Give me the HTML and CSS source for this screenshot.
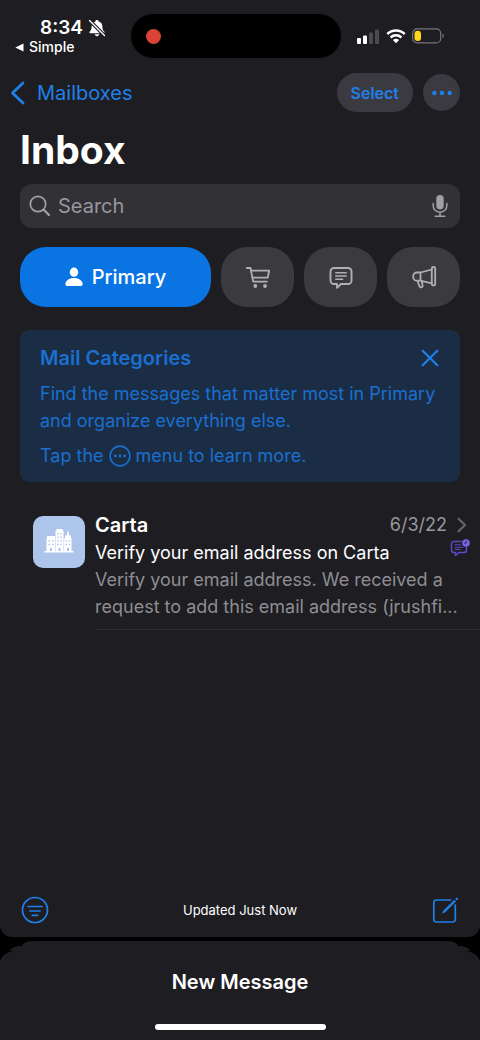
FILE: index.html
```html
<!DOCTYPE html>
<html lang="en">
<head>
<meta charset="utf-8">
<meta name="viewport" content="width=device-width, initial-scale=1">
<title>Inbox</title>
<link rel="stylesheet" href="styles.css">
</head>
<body>
<div class="screen">
  <div class="mailbox">
    <header class="status">
      <div class="status-left">
        <div class="clock">
          <span>8:34</span>
          <svg width="18" height="18" viewBox="0 0 18 18" aria-hidden="true">
            <path fill="#fff" d="M9 1c-1 0-1.600.7-1.700 1.500C4.600 3.300 3.600 5.200 3.600 7.800c0 2.600-.7 3.700-1.800 4.800-.7.800-.3 1.700.6 1.700h13.200c.9 0 1.300-.9.600-1.700-1.100-1.100-1.800-2.200-1.800-4.800 0-2.600-1-4.500-3.700-5.300C10.600 1.700 10 1 9 1z"/>
            <path fill="#fff" d="M6.700 15.300h4.600c-.2 1.100-1.100 1.900-2.300 1.900s-2.100-.8-2.300-1.900z"/>
            <path stroke="#1e1d22" stroke-width="3.600" d="M1 1l16 16"/>
            <path stroke="#fff" stroke-width="1.400" stroke-linecap="round" d="M1.500 1.500l15 15"/>
          </svg>
        </div>
        <a class="return" href="#simple">
          <svg width="9" height="9" viewBox="0 0 9 9" aria-hidden="true"><path fill="#fff" d="M8.500.4v8.200L.3 4.500z"/></svg>
          Simple
        </a>
      </div>
      <div class="island"><span class="record"></span></div>
      <div class="status-right">
        <svg width="24" height="16" viewBox="0 0 24 16" aria-hidden="true">
          <rect x="1" y="10" width="4" height="6" rx="1" fill="#fff"/>
          <rect x="7" y="7.500" width="4" height="8.500" rx="1" fill="#fff"/>
          <rect x="13" y="4.500" width="4" height="11.500" rx="1" fill="#4b4a50"/>
          <rect x="19" y="1.500" width="4" height="14.500" rx="1" fill="#4b4a50"/>
        </svg>
        <svg width="20" height="16" viewBox="0 0 20 16" aria-hidden="true">
          <g fill="none" stroke="#fff" stroke-width="2.500">
            <path d="M1.300 6a12.600 12.600 0 0 1 17.400 0"/>
            <path d="M4.600 9.500a7.900 7.900 0 0 1 10.800 0"/>
          </g>
          <path fill="#fff" d="M6.900 12a4.700 4.700 0 0 1 6.200 0L10 15.300z"/>
        </svg>
        <svg width="33" height="16" viewBox="0 0 33 16" aria-hidden="true">
          <rect x=".7" y=".9" width="28" height="14" rx="4.500" fill="none" stroke="#77767b" stroke-width="1.200"/>
          <rect x="2.500" y="2.800" width="6.500" height="10.200" rx="3" fill="#fdd816"/>
          <path fill="#77767b" d="M30.500 5.500c1.800.6 1.800 4 0 4.600z"/>
        </svg>
      </div>
    </header>

    <nav class="navbar">
      <a class="back" href="#mailboxes">
        <svg width="16" height="26" viewBox="0 0 16 26" aria-hidden="true"><path d="M13 3L2.500 13 13 23" fill="none" stroke="currentColor" stroke-width="2.800" stroke-linecap="round" stroke-linejoin="round"/></svg>
        Mailboxes
      </a>
      <button class="select" type="button">Select</button>
      <button class="more" type="button" aria-label="More">
        <svg width="20" height="6" viewBox="0 0 20 6" aria-hidden="true"><g fill="currentColor"><circle cx="2.300" cy="3" r="2.200"/><circle cx="10" cy="3" r="2.200"/><circle cx="17.700" cy="3" r="2.200"/></g></svg>
      </button>
    </nav>

    <main class="content">
      <h1 class="title">Inbox</h1>

      <label class="search">
        <svg width="22" height="22" viewBox="0 0 22 22" aria-hidden="true"><g fill="none" stroke="currentColor" stroke-linecap="round"><circle cx="9" cy="9" r="7.700" stroke-width="1.700"/><path d="M14.800 14.800l5.200 5.200" stroke-width="2.200"/></g></svg>
        <input class="search-input" type="search" placeholder="Search" aria-label="Search">
        <svg width="16" height="24" viewBox="0 0 16 24" aria-hidden="true"><rect x="4.300" y="1" width="7.400" height="14.500" rx="3.700" fill="currentColor"/><path d="M1.200 9.500v2.200a6.800 6.500 0 0 0 13.600 0V9.500M8 18.200v4M3.300 22.300h9.400" fill="none" stroke="currentColor" stroke-width="1.500" stroke-linecap="round"/></svg>
      </label>

      <div class="categories">
        <button class="category category-active" type="button">
          <svg width="18" height="20" viewBox="0 0 18 20" aria-hidden="true"><ellipse cx="9" cy="5.200" rx="4.200" ry="4.600" fill="currentColor"/><path fill="currentColor" d="M.4 17.300c0-3.600 3.800-6.200 8.600-6.200s8.600 2.600 8.600 6.200c0 1.100-.6 1.700-1.700 1.700H2.100C1 19 .4 18.400.4 17.300z"/></svg>
          Primary
        </button>
        <button class="category" type="button" aria-label="Transactions">
          <svg width="26" height="24" viewBox="0 0 26 24" aria-hidden="true"><g fill="none" stroke="currentColor" stroke-width="1.800" stroke-linecap="round" stroke-linejoin="round"><path d="M1.800 3h3.700l2.700 13.700h13.600"/><path d="M6.200 5.700h18l-1.500 7H7.500"/></g><circle cx="10.300" cy="21" r="1.900" fill="currentColor"/><circle cx="20" cy="21" r="1.900" fill="currentColor"/></svg>
        </button>
        <button class="category" type="button" aria-label="Updates">
          <svg width="24" height="24" viewBox="0 0 24 24" aria-hidden="true"><g fill="none" stroke="currentColor" stroke-linecap="round" stroke-linejoin="round"><path stroke-width="1.900" d="M5 3h14a3.500 3.500 0 0 1 3.500 3.500v9A3.500 3.500 0 0 1 19 19h-7l-4 3.800V19H5a3.500 3.500 0 0 1-3.500-3.500v-9A3.500 3.500 0 0 1 5 3z"/><path stroke-width="1.400" d="M6.700 7.700h10.600M6.700 11h10.600M6.700 14.300h7"/></g></svg>
        </button>
        <button class="category" type="button" aria-label="Promotions">
          <svg width="26" height="24" viewBox="0 0 26 24" aria-hidden="true"><g fill="none" stroke="currentColor" stroke-width="1.800" stroke-linejoin="round" stroke-linecap="round"><rect x="20.800" y="2" width="3.400" height="18.500" rx="1.500"/><path d="M20.800 4.500L9.500 7.500H6A3.800 3.800 0 0 0 2.200 11.300v.6A3.800 3.800 0 0 0 6 15.700h3.500l11.300 2.700M9.500 7.500v8.200M6.600 16l1.600 4.800c.4 1.300 1.200 1.800 2.200 1.500s1.400-1.200 1.100-2.300L10.600 16"/></g></svg>
        </button>
      </div>

      <section class="tip" aria-labelledby="tip-title">
        <div class="tip-head">
          <h2 class="tip-title" id="tip-title">Mail Categories</h2>
          <button class="close" type="button" aria-label="Close">
            <svg width="18" height="18" viewBox="0 0 18 18" aria-hidden="true"><path d="M1.700 1.700l14.600 14.600M16.300 1.700L1.700 16.300" stroke="currentColor" stroke-width="2.300" stroke-linecap="round"/></svg>
          </button>
        </div>
        <p class="tip-text">Find the messages that matter most in Primary and organize everything else.</p>
        <p class="tip-text tip-menu">Tap the
          <svg width="22" height="22" viewBox="0 0 22 22" aria-hidden="true"><circle cx="11" cy="11" r="9.900" fill="none" stroke="currentColor" stroke-width="1.600"/><g fill="currentColor"><circle cx="6.200" cy="11" r="1.400"/><circle cx="11" cy="11" r="1.400"/><circle cx="15.800" cy="11" r="1.400"/></g></svg>
          menu to learn more.</p>
      </section>
    </main>

    <article class="message">
      <div class="avatar">
        <svg width="30" height="30" viewBox="0 0 30 30" aria-hidden="true">
          <path fill="#fff" d="M.5 24h2V11.500H3V9h8v2.500h.5v-8h1V2h6v1.500h1v8H21V8.500h1.800L23.600 4h.8l.8 4.500H27v3h.5V24h2v1.400H.5z"/>
          <g fill="#a9c2e8"><path d="M4.500 13.200H6v1.600H4.500zM8 13.200h1.500v1.600H8zM4.500 16.700H6v1.600H4.500zM8 16.700h1.500v1.600H8zM13.300 6h1.300v1.600h-1.300zM16.400 6h1.300v1.600h-1.300zM13.300 9.500h1.300v1.600h-1.300zM16.400 9.500h1.300v1.600h-1.300zM13.300 13.200h1.300v1.600h-1.300zM16.400 13.200h1.300v1.600h-1.300zM13.300 16.700h1.300v1.600h-1.300zM16.400 16.700h1.300v1.600h-1.300zM21.700 13.200H23v1.600h-1.300zM24.800 13.200h1.300v1.600h-1.300zM21.700 16.700H23v1.600h-1.300zM24.800 16.700h1.300v1.600h-1.300zM6 21h2v3H6zM14.500 21h2v3h-2zM23 21h2v3h-2zM11 12h.5v12H11zM19.600 12h.5v12h-.5z"/></g>
        </svg>
      </div>
      <div class="message-body">
        <div class="message-head">
          <h3 class="sender">Carta</h3>
          <time class="date" datetime="2022-06-03">6/3/22</time>
          <svg width="10" height="16" viewBox="0 0 10 16" aria-hidden="true"><path d="M1.500 1.800L8 8l-6.500 6.200" fill="none" stroke="#66656a" stroke-width="2.200" stroke-linecap="round" stroke-linejoin="round"/></svg>
        </div>
        <div class="subject-row">
          <p class="subject">Verify your email address on Carta</p>
          <svg width="20" height="18" viewBox="0 0 20 18" aria-hidden="true"><g fill="none" stroke="#5b4acb" stroke-linecap="round" stroke-linejoin="round"><path stroke-width="1.500" d="M11 2.500H4A2.500 2.500 0 0 0 1.500 5v6A2.500 2.500 0 0 0 4 13.500h1.500v3l3.300-3H14a2.500 2.500 0 0 0 2.500-2.500V8"/><path stroke-width="1.100" d="M5 5.800h5.500M5 8.200h8M5 10.500h5"/></g><circle cx="16" cy="4" r="3.800" fill="#7665eb"/><path d="M16.200 1.800V4.200h-2" fill="none" stroke="#1e1d22" stroke-width=".8"/></svg>
        </div>
        <p class="preview">Verify your email address. We received a request to add this email address (jrushfi...</p>
      </div>
    </article>

    <footer class="toolbar">
      <button class="tool" type="button" aria-label="Filter">
        <svg width="28" height="28" viewBox="0 0 28 28" aria-hidden="true"><g fill="none" stroke="currentColor" stroke-width="1.700" stroke-linecap="round"><circle cx="14" cy="14" r="12.500"/><path d="M7 10.500h14M9 15h10M11.200 19.300h5.600"/></g></svg>
      </button>
      <p class="updated">Updated Just Now</p>
      <button class="tool" type="button" aria-label="Compose">
        <svg width="28" height="28" viewBox="0 0 28 28" aria-hidden="true"><g fill="none" stroke="currentColor" stroke-width="1.700" stroke-linecap="round" stroke-linejoin="round"><path d="M19.500 4H5.300A2.500 2.500 0 0 0 2.800 6.500v17A2.500 2.500 0 0 0 5.300 26h16.500a2.500 2.500 0 0 0 2.500-2.500V9"/></g><path fill="currentColor" d="M11 17.600l1.200-2.900L23.300 3.700l1.700 1.700-11.100 11zM24.300 2.700l.9-.9c.9-.8 2.500.8 1.700 1.700l-.9.900z"/></svg>
      </button>
    </footer>
  </div>

  <div class="sheet-back"></div>
  <div class="sheet-middle"></div>
  <section class="draft">
    <h2 class="draft-title">New Message</h2>
    <div class="home"></div>
  </section>
</div>
</body>
</html>
```

FILE: styles.css
```css
* {
  box-sizing: border-box;
}

body,
h1,
h2,
h3,
p {
  margin: 0;
}

body {
  background: #000;
  color: #fff;
  font-family: Inter, "Liberation Sans", sans-serif;
}

svg {
  display: block;
  flex: none;
}

button {
  padding: 0;
  border: 0;
  background: none;
  color: inherit;
  font: inherit;
}

a {
  color: inherit;
  text-decoration: none;
}

.screen {
  display: flex;
  flex-direction: column;
  min-height: 100vh;
}

.mailbox {
  display: flex;
  flex: 1;
  flex-direction: column;
  border-radius: 0 0 12px 12px;
  background: #1e1d22;
}

/* Status bar */

.status {
  display: grid;
  grid-template-columns: 131fr 210fr 139fr;
  align-items: center;
  padding: 14px 0;
}

.status-left {
  padding-left: 15px;
}

.clock {
  display: flex;
  align-items: center;
  gap: 5px;
  padding-left: 25px;
  font-size: 19px;
  font-weight: 600;
  line-height: 22px;
}

.return {
  display: flex;
  align-items: center;
  gap: 5px;
  font-size: 14px;
  font-weight: 500;
  line-height: 16px;
}

.island {
  display: flex;
  align-items: center;
  height: 44px;
  padding-left: 15px;
  border-radius: 22px;
  background: #000;
}

.record {
  width: 15px;
  height: 15px;
  border-radius: 50%;
  background: #d94336;
}

.status-right {
  display: flex;
  align-items: center;
  gap: 6px;
  padding-left: 15px;
}

/* Navigation */

.navbar {
  display: flex;
  align-items: center;
  padding: 1px 20px 0 10px;
  color: #1f80ea;
}

.back {
  display: flex;
  align-items: center;
  gap: 11px;
  margin-right: auto;
  font-size: 20px;
}

.select {
  height: 39px;
  padding: 0 14px;
  border-radius: 20px;
  background: #3b3a40;
  font-size: 16px;
  font-weight: 600;
}

.more {
  display: grid;
  place-items: center;
  width: 37px;
  height: 37px;
  margin-left: 10px;
  border-radius: 50%;
  background: #3b3a40;
}

/* Content */

.content {
  padding: 14px 20px 0;
}

.title {
  font-size: 39px;
  font-weight: 700;
  line-height: 48px;
}

.search {
  display: flex;
  align-items: center;
  height: 44px;
  margin-top: 10px;
  padding: 0 12px 0 9px;
  border-radius: 12px;
  background: #323136;
  color: #a1a0a6;
}

.search-input {
  flex: 1;
  min-width: 0;
  padding: 0 7px;
  border: 0;
  outline: 0;
  background: none;
  color: #fff;
  font: inherit;
  font-size: 20px;
}

.search-input::placeholder {
  color: #98979d;
  opacity: 1;
}

.categories {
  display: grid;
  grid-template-columns: 191fr 73fr 73fr 73fr;
  gap: 10px;
  margin-top: 19px;
}

.category {
  display: flex;
  align-items: center;
  justify-content: center;
  gap: 9px;
  height: 60px;
  border-radius: 26px;
  background: #3b3a3f;
  color: #b0afb5;
}

.category-active {
  background: #0b74e3;
  color: #fff;
  font-size: 20px;
  font-weight: 500;
}

.tip {
  margin-top: 23px;
  padding: 14px 20px 13px;
  border-radius: 9px;
  background: #1b2d45;
  color: #1a6fd0;
}

.tip-head {
  display: flex;
  align-items: center;
  justify-content: space-between;
}

.tip-title {
  font-size: 20px;
  font-weight: 600;
  line-height: 28px;
}

.close {
  padding: 0 1px;
  color: #1f7fe6;
}

.tip-text {
  margin-top: 8px;
  font-size: 18px;
  line-height: 27px;
}

.tip-menu {
  display: flex;
  align-items: center;
  gap: 5px;
}

/* Message list */

.message {
  display: flex;
  gap: 10px;
  margin-top: 29px;
  padding-left: 33px;
}

.avatar {
  display: grid;
  place-items: center;
  width: 52px;
  height: 52px;
  margin-top: 5px;
  border-radius: 10px;
  background: #adc5ea;
}

.message-body {
  flex: 1;
  min-width: 0;
  padding-bottom: 9px;
  border-bottom: 1px solid #302f34;
}

.message-head {
  display: flex;
  align-items: center;
  gap: 10px;
  padding-right: 13px;
  line-height: 28px;
}

.sender {
  flex: 1;
  font-size: 20px;
  font-weight: 600;
}

.date {
  color: #98979c;
  font-size: 18px;
}

.subject-row {
  display: flex;
  align-items: flex-start;
  justify-content: space-between;
  padding-right: 10px;
}

.subject {
  font-size: 18px;
  line-height: 27px;
}

.preview {
  padding-right: 20px;
  color: #8e8d92;
  font-size: 18px;
  line-height: 27px;
}

/* Toolbar */

.toolbar {
  display: flex;
  align-items: center;
  justify-content: space-between;
  margin-top: auto;
  padding: 0 21px 13px;
}

.tool {
  color: #1f80ea;
}

.updated {
  font-size: 13px;
}

/* Draft sheets */

.sheet-back,
.sheet-middle {
  height: 5px;
  border-radius: 12px 12px 0 0 / 5px 5px 0 0;
  background: #1e1d22;
}

.sheet-back {
  margin: 4px 22px 0;
}

.sheet-middle {
  margin: 0 10px;
}

.draft {
  display: flex;
  flex-direction: column;
  align-items: center;
  padding: 17px 0 10px;
  border-radius: 16px 16px 0 0 / 12px 12px 0 0;
  background: #1e1d22;
}

.draft-title {
  font-size: 20px;
  font-weight: 600;
  line-height: 28px;
}

.home {
  width: 171px;
  height: 6px;
  margin-top: 28px;
  border-radius: 3px;
  background: #fff;
}
```
